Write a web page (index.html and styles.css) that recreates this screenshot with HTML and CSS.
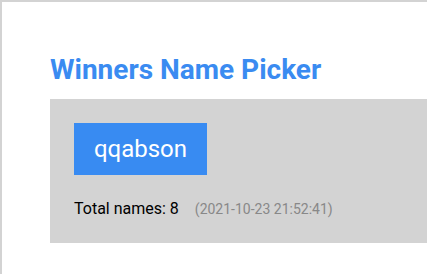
FILE: index.html
```html
<!DOCTYPE html>
<html>
<head>
<meta charset="utf-8">
<link rel="stylesheet" href="styles.css">
</head>
<body>
<div class="frame">
  <h1 class="title">Winners Name Picker</h1>
  <div class="panel">
    <div class="winner">qqabson</div>
    <div class="meta">
      <span class="total">Total names: 8</span>
      <span class="time">(2021-10-23 21:52:41)</span>
    </div>
  </div>
</div>
</body>
</html>
```
FILE: styles.css
```css
html, body {
  margin: 0;
  padding: 0;
  background: #ffffff;
}
body {
  font-family: Roboto, "Liberation Sans", sans-serif;
  height: 276px;
  overflow: hidden;
}
.frame {
  border-top: 2px solid #d3d3d3;
  border-left: 2px solid #d3d3d3;
  height: 274px;
  padding-left: 48px;
  padding-top: 48px;
  box-sizing: border-box;
}
.title {
  margin: 0;
  font-size: 28px;
  line-height: 40px;
  font-weight: 700;
  color: #3a8bf1;
  height: 49px;
}
.panel {
  background: #d3d3d3;
  padding: 24px 24px 0 24px;
  height: 144px;
  box-sizing: border-box;
}
.winner {
  display: inline-block;
  background: #388bf2;
  color: #ffffff;
  font-size: 24px;
  width: 133px;
  height: 52px;
  line-height: 52px;
  text-align: center;
}
.meta {
  margin-top: 24px;
  display: flex;
  align-items: baseline;
  gap: 16px;
}
.total {
  font-size: 16px;
  color: #000000;
}
.time {
  font-size: 14px;
  color: #888888;
}
```
